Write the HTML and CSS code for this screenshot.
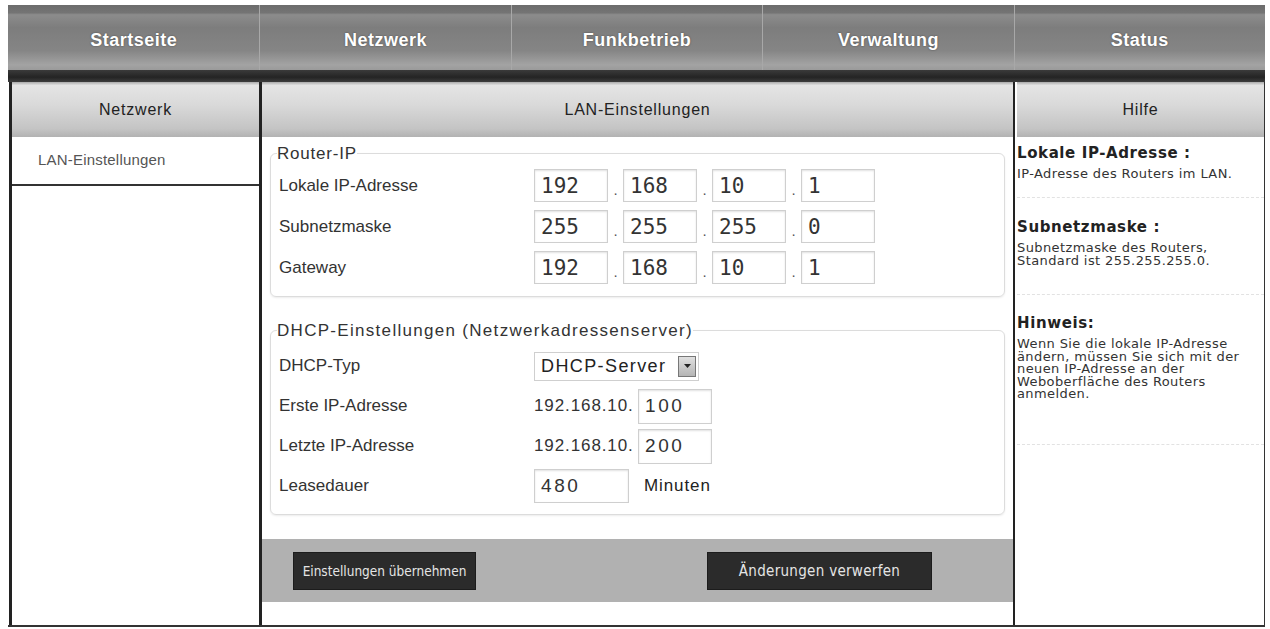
FILE: index.html
```html
<!DOCTYPE html>
<html lang="de">
<head>
<meta charset="utf-8">
<title>LAN-Einstellungen</title>
<link rel="stylesheet" href="styles.css">
</head>
<body>
<div class="page">
  <nav class="topnav">
    <a class="tab">Startseite</a>
    <a class="tab">Netzwerk</a>
    <a class="tab">Funkbetrieb</a>
    <a class="tab">Verwaltung</a>
    <a class="tab">Status</a>
  </nav>
  <div class="band"></div>
  <div class="main">
    <aside class="sidebar">
      <div class="colhead">Netzwerk</div>
      <div class="sideitem">LAN-Einstellungen</div>
    </aside>
    <section class="content">
      <div class="colhead">LAN-Einstellungen</div>
      <fieldset class="group group-router">
        <legend>Router-IP</legend>
        <div class="row">
          <span class="label">Lokale IP-Adresse</span>
          <div class="ip">
            <span class="field">192</span><span class="dot">.</span>
            <span class="field">168</span><span class="dot">.</span>
            <span class="field">10</span><span class="dot">.</span>
            <span class="field">1</span>
          </div>
        </div>
        <div class="row">
          <span class="label">Subnetzmaske</span>
          <div class="ip">
            <span class="field">255</span><span class="dot">.</span>
            <span class="field">255</span><span class="dot">.</span>
            <span class="field">255</span><span class="dot">.</span>
            <span class="field">0</span>
          </div>
        </div>
        <div class="row">
          <span class="label">Gateway</span>
          <div class="ip">
            <span class="field">192</span><span class="dot">.</span>
            <span class="field">168</span><span class="dot">.</span>
            <span class="field">10</span><span class="dot">.</span>
            <span class="field">1</span>
          </div>
        </div>
      </fieldset>
      <fieldset class="group group-dhcp">
        <legend>DHCP-Einstellungen (Netzwerkadressenserver)</legend>
        <div class="row row-d">
          <span class="label">DHCP-Typ</span>
          <div class="select"><span class="select-text">DHCP-Server</span><span class="select-btn"><svg width="9" height="6" viewBox="0 0 9 6"><path d="M1 1h7L4.5 5z" fill="#222"/></svg></span></div>
        </div>
        <div class="row row-d">
          <span class="label">Erste IP-Adresse</span>
          <span class="prefix">192.168.10.</span><span class="field field-s">100</span>
        </div>
        <div class="row row-d">
          <span class="label">Letzte IP-Adresse</span>
          <span class="prefix">192.168.10.</span><span class="field field-s">200</span>
        </div>
        <div class="row row-d">
          <span class="label">Leasedauer</span>
          <span class="field field-l">480</span><span class="unit">Minuten</span>
        </div>
      </fieldset>
      <div class="actions">
        <button class="btn btn-apply">Einstellungen übernehmen</button>
        <button class="btn btn-cancel">Änderungen verwerfen</button>
      </div>
    </section>
    <aside class="help">
      <div class="colhead">Hilfe</div>
      <div class="helpitem">
        <h3>Lokale IP-Adresse :</h3>
        <p>IP-Adresse des Routers im LAN.</p>
      </div>
      <div class="helpitem">
        <h3>Subnetzmaske :</h3>
        <p>Subnetzmaske des Routers, Standard ist 255.255.255.0.</p>
      </div>
      <div class="helpitem">
        <h3>Hinweis:</h3>
        <p>Wenn Sie die lokale IP-Adresse ändern, müssen Sie sich mit der neuen IP-Adresse an der Weboberfläche des Routers anmelden.</p>
      </div>
    </aside>
  </div>
</div>
</body>
</html>
```
FILE: styles.css
```css
* { box-sizing: border-box; }
html, body { margin: 0; padding: 0; background: #fff; }
body { font-family: "Liberation Sans", Arial, sans-serif; color: #333; }

.page { margin: 5px 5px 0 8px; width: 1257px; }

.topnav {
  display: grid;
  grid-template-columns: repeat(5, 1fr);
  height: 65px;
  background: linear-gradient(#6c6c6c 0, #747474 12%, #8c8c8c 15%, #7d7d7d 35%, #858585 70%, #a3a3a3 92%, #9a9a9a 100%);
}
.tab {
  display: flex; align-items: center; justify-content: center;
  padding-top: 6px;
  color: #fff; font-weight: bold; font-size: 18px; letter-spacing: 0.5px;
  text-shadow: 0 0 2px rgba(0,0,0,.45);
  border-left: 1px solid #a8a8a8;
}
.tab:first-child { border-left: none; }

.band { height: 12px; background: linear-gradient(#3a3a3a, #242424 60%, #3c3c3c); }

.main {
  display: grid;
  grid-template-columns: 254px 751px 252px;
  height: 545px;
  border-bottom: 2px solid #333;
}
.colhead {
  height: 55px;
  display: flex; align-items: center; justify-content: center;
  font-size: 16px; letter-spacing: 0.8px; color: #222;
  background: linear-gradient(#a9a9a9 0, #e4e4e4 6%, #dadada 40%, #c4c4c4 85%, #b2b2b2 100%);
}

.sidebar { border-left: 3px solid #222; border-right: 3px solid #222; margin-left: 1px; }
.sideitem {
  height: 49px; padding: 14px 0 0 26px;
  font-size: 15px; letter-spacing: 0.2px; color: #555;
  border-bottom: 2px solid #333;
}

.content { display: flex; flex-direction: column; }
.group {
  margin: 8px 8px 0 8px;
  padding: 0 8px;
  border: 1px solid #dcdcdc;
  border-radius: 6px;
  box-shadow: 0 1px 2px rgba(0,0,0,.08);
}
.group legend { padding: 0; font-size: 17px; line-height: 17px; letter-spacing: 1.3px; color: #333; margin-left: -2px; }
.group-router legend { letter-spacing: 0.8px; }
.group-router { padding-top: 3px; padding-bottom: 8px; }
.group-dhcp { margin-top: 25px; padding-top: 7px; padding-bottom: 8px; }

.row { display: flex; align-items: center; height: 41px; }
.row-d { height: 40px; }
.label { width: 255px; font-size: 17px; color: #333; }
.ip { display: flex; align-items: center; }
.field {
  display: flex; align-items: center;
  width: 74px; height: 33px;
  padding-left: 6px;
  border: 1px solid #cfcfcf;
  box-shadow: inset 0 1px 2px rgba(0,0,0,.12);
  font-family: "DejaVu Sans Mono", monospace; font-size: 21px; color: #333;
}
.dot { width: 15px; text-align: center; font-size: 15px; color: #555; padding-top: 8px; }
.field-s, .field-l { font-family: "Liberation Sans", Arial, sans-serif; font-size: 19px; letter-spacing: 2.6px; }
.field-s { width: 74px; height: 35px; }
.field-l { width: 95px; height: 34px; }
.prefix { width: 104px; font-size: 17px; letter-spacing: 0.9px; color: #333; }
.unit { margin-left: 15px; font-size: 17px; letter-spacing: 0.9px; color: #222; }

.select {
  display: flex; align-items: center;
  width: 165px; height: 29px;
  border: 1px solid #cfcfcf;
  padding: 0 2px 0 6px;
}
.select-text { flex: 1; font-size: 18px; letter-spacing: 1.4px; color: #222; white-space: nowrap; }
.select-btn {
  width: 18px; height: 21px;
  display: flex; align-items: center; justify-content: center;
  background: linear-gradient(#e0e0e0, #b4b4b4);
  border: 1px solid #777;
}

.actions {
  margin-top: 24px;
  height: 63px;
  background: #b1b1b1;
  display: flex; align-items: center;
  padding-left: 31px;
}
.btn {
  height: 38px;
  background: #2b2b2b;
  color: #e4e4e4;
  border: 1px solid #1c1c1c;
  font-family: "DejaVu Sans Condensed", "DejaVu Sans", sans-serif; font-stretch: condensed;
  font-size: 13.5px; letter-spacing: 0; white-space: nowrap;
  padding: 0;
}
.btn-apply { width: 183px; }
.btn-cancel { width: 225px; margin-left: 231px; font-size: 15px; letter-spacing: 0.3px; }

.help { border-left: 2px solid #222; border-right: 1px solid #333; padding-left: 2px; }
.helpitem { border-bottom: 1px dashed #e2e2e2; padding: 7px 4px 0 0; }
.helpitem h3 { margin: 0; font-family: "DejaVu Sans", sans-serif; font-size: 15px; line-height: 18px; letter-spacing: 0.6px; font-weight: bold; color: #222; }
.helpitem p { margin: 6px 0 0; font-family: "DejaVu Sans", sans-serif; font-size: 13px; line-height: 12.5px; letter-spacing: 0.4px; color: #333; }
.helpitem:nth-child(2) { height: 61px; }
.helpitem:nth-child(3) { height: 97px; padding-top: 20px; }
.helpitem:nth-child(4) { height: 150px; padding-top: 19px; }
```
